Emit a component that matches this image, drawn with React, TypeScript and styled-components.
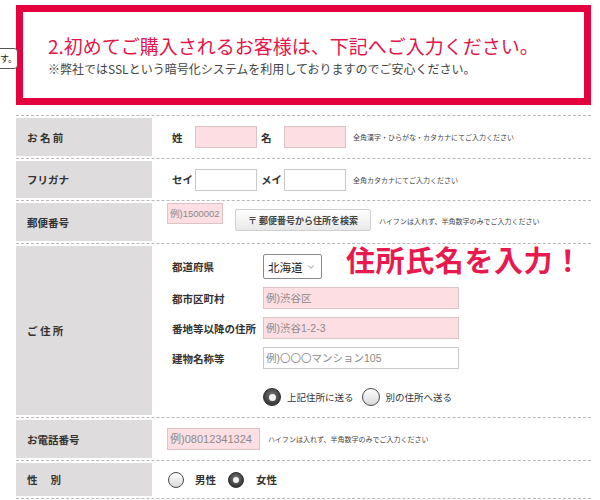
import React from 'react'
import styled, { createGlobalStyle } from 'styled-components'
import { ChevronDown } from 'lucide-react'

const GlobalStyle = createGlobalStyle`
    html, body {
        margin: 0;
        padding: 0;
        background: #ffffff;
        font-family: "Noto Sans CJK JP", "Noto Sans", sans-serif;
        color: #333;
    }
`

const Page = styled.div`
    position: relative;
    width: 600px;
    height: 500px;
    overflow: hidden;
    padding: 5px 9px 0 16px;
    box-sizing: border-box;
`

const Bubble = styled.div`
    position: absolute;
    left: -1px;
    top: 48px;
    width: 19px;
    height: 21px;
    box-sizing: border-box;
    border: 1px solid #555;
    border-radius: 0 4px 4px 0;
    background: #fff;
    font-size: 9px;
    line-height: 19px;
    color: #222;
    z-index: 2;
    white-space: nowrap;
`

const Banner = styled.div`
    height: 100px;
    box-sizing: border-box;
    border: 7px solid #e5003e;
    padding: 22px 0 0 25px;
`

const BannerTitle = styled.div`
    font-size: 19px;
    line-height: 24px;
    color: #e3154b;
`

const BannerNote = styled.div`
    margin-top: 3px;
    font-size: 12px;
    line-height: 15px;
    color: #444;
`

const Table = styled.div`
    margin-top: 10px;
    border-top: 1px dashed #b8b8b8;
`

const Row = styled.div<{ $h: number }>`
    position: relative;
    display: flex;
    padding: 2px 0;
    border-bottom: 1px dashed #b8b8b8;
    height: ${(p) => p.$h}px;
`

const HeadCell = styled.div`
    width: 136px;
    flex-shrink: 0;
    background: #dedcdc;
    display: flex;
    align-items: center;
    padding-left: 11px;
    box-sizing: border-box;
    font-size: 10.5px;
    font-weight: bold;
    color: #333;
    white-space: pre;
`

const BodyCell = styled.div<{ $pl?: number; $top?: boolean }>`
    flex: 1;
    display: flex;
    align-items: ${(p) => (p.$top ? 'flex-start' : 'center')};
    padding-left: ${(p) => p.$pl ?? 15}px;
`

const FieldLabel = styled.span<{ $ml?: number }>`
    width: 23px;
    margin-left: ${(p) => p.$ml ?? 0}px;
    font-size: 10.5px;
    font-weight: bold;
    color: #333;
`

const Input = styled.input<{ $w: number; $h?: number; $pink?: boolean; $fs?: number }>`
    width: ${(p) => p.$w}px;
    height: ${(p) => p.$h ?? 22}px;
    box-sizing: border-box;
    border: 1px solid ${(p) => (p.$pink ? '#dcc3c6' : '#c9c9c9')};
    background: ${(p) => (p.$pink ? '#fddee2' : '#ffffff')};
    padding: 0 2px;
    margin: 0;
    font-family: "Liberation Sans", "Noto Sans CJK JP", sans-serif;
    font-size: ${(p) => p.$fs ?? 11}px;
    outline: none;

    &::placeholder {
        color: #8a8a8a;
    }
`

const Hint = styled.span<{ $ml: number; $mt?: number }>`
    margin-left: ${(p) => p.$ml}px;
    margin-top: ${(p) => p.$mt ?? 0}px;
    font-size: 7px;
    color: #444;
    white-space: nowrap;
`

const SearchButton = styled.button`
    margin: 6px 0 0 12px;
    width: 136px;
    height: 22px;
    border: 1px solid #cfcfcf;
    border-radius: 2px;
    background: linear-gradient(#ffffff, #e8e8e8);
    font-family: "Noto Sans CJK JP", sans-serif;
    font-size: 9px;
    font-weight: bold;
    color: #444;
    padding: 0;
`

const AddressBody = styled.div`
    flex: 1;
    display: flex;
    flex-direction: column;
    gap: 8px;
    padding: 8px 0 0 20px;
`

const SubRow = styled.div<{ $mt?: number }>`
    display: flex;
    align-items: center;
    margin-top: ${(p) => p.$mt ?? 0}px;
`

const SubLabel = styled.span`
    width: 91px;
    font-size: 10.5px;
    font-weight: bold;
    color: #333;
    white-space: nowrap;
`

const SelectBox = styled.div`
    width: 59px;
    height: 25px;
    box-sizing: border-box;
    border: 1px solid #8a8a8a;
    border-radius: 2px;
    display: flex;
    align-items: center;
    justify-content: space-between;
    padding: 0 5px 0 4px;
    font-size: 11.5px;
    color: #222;
    background: #fff;
`

const Callout = styled.div`
    position: absolute;
    left: 330px;
    top: -6px;
    font-size: 29px;
    font-weight: bold;
    color: #e8194f;
    letter-spacing: 0.6px;
    white-space: nowrap;
`

const RadioGroup = styled.div<{ $ml?: number }>`
    display: flex;
    align-items: center;
    margin-left: ${(p) => p.$ml ?? 0}px;
`

const Radio = styled.span<{ $on?: boolean; $size: number }>`
    width: ${(p) => p.$size}px;
    height: ${(p) => p.$size}px;
    box-sizing: border-box;
    border-radius: 50%;
    display: flex;
    align-items: center;
    justify-content: center;
    border: 1px solid ${(p) => (p.$on ? '#2a2a2a' : '#4a4a4a')};
    background: ${(p) =>
        p.$on
            ? 'radial-gradient(circle at 50% 40%, #7a7a7a, #3a3a3a 70%)'
            : 'linear-gradient(#ffffff, #d9d9d9)'};

    &::after {
        content: '';
        display: ${(p) => (p.$on ? 'block' : 'none')};
        width: ${(p) => Math.round(p.$size * 0.38)}px;
        height: ${(p) => Math.round(p.$size * 0.38)}px;
        border-radius: 50%;
        background: #f4f4f4;
    }
`

const RadioText = styled.span<{ $ml: number; $bold?: boolean; $fs: number }>`
    margin-left: ${(p) => p.$ml}px;
    font-size: ${(p) => p.$fs}px;
    font-weight: ${(p) => (p.$bold ? 'bold' : 'normal')};
    color: #333;
`

const App: React.FC = () => {
    return (
        <Page>
            <GlobalStyle />
            <Bubble>す。</Bubble>
            <Banner>
                <BannerTitle>
                    2.初めてご購入されるお客様は、下記へご入力ください。
                </BannerTitle>
                <BannerNote>
                    ※弊社ではSSLという暗号化システムを利用しておりますのでご安心ください。
                </BannerNote>
            </Banner>

            <Table>
                <Row $h={38}>
                    <HeadCell>お 名 前</HeadCell>
                    <BodyCell $pl={20}>
                        <FieldLabel>姓</FieldLabel>
                        <Input $w={62} $pink />
                        <FieldLabel $ml={4}>名</FieldLabel>
                        <Input $w={62} $pink />
                        <Hint $ml={7}>全角漢字・ひらがな・カタカナにてご入力ください</Hint>
                    </BodyCell>
                </Row>

                <Row $h={37}>
                    <HeadCell>フリガナ</HeadCell>
                    <BodyCell $pl={20}>
                        <FieldLabel>セイ</FieldLabel>
                        <Input $w={62} />
                        <FieldLabel $ml={4}>メイ</FieldLabel>
                        <Input $w={62} />
                        <Hint $ml={7}>全角カタカナにてご入力ください</Hint>
                    </BodyCell>
                </Row>

                <Row $h={38}>
                    <HeadCell>郵便番号</HeadCell>
                    <BodyCell $top>
                        <Input $w={56} $h={21} $pink $fs={9.5} placeholder="例)1500002" />
                        <SearchButton>〒 郵便番号から住所を検索</SearchButton>
                        <Hint $ml={8} $mt={13}>
                            ハイフンは入れず、半角数字のみでご入力ください
                        </Hint>
                    </BodyCell>
                </Row>

                <Row $h={169}>
                    <HeadCell>ご 住 所</HeadCell>
                    <AddressBody>
                        <SubRow>
                            <SubLabel>都道府県</SubLabel>
                            <SelectBox>
                                <span>北海道</span>
                                <ChevronDown size={10} strokeWidth={1.5} color="#555" />
                            </SelectBox>
                        </SubRow>
                        <SubRow>
                            <SubLabel>都市区町村</SubLabel>
                            <Input $w={196} $pink $fs={10.5} placeholder="例)渋谷区" />
                        </SubRow>
                        <SubRow>
                            <SubLabel>番地等以降の住所</SubLabel>
                            <Input $w={196} $pink $fs={10.5} placeholder="例)渋谷1-2-3" />
                        </SubRow>
                        <SubRow>
                            <SubLabel>建物名称等</SubLabel>
                            <Input $w={196} $fs={10.5} placeholder="例)〇〇〇マンション105" />
                        </SubRow>
                        <SubRow $mt={11}>
                            <SubLabel />
                            <RadioGroup>
                                <Radio $on $size={18} />
                                <RadioText $ml={6} $fs={9.5}>上記住所に送る</RadioText>
                            </RadioGroup>
                            <RadioGroup $ml={8}>
                                <Radio $size={18} />
                                <RadioText $ml={6} $fs={9.5}>別の住所へ送る</RadioText>
                            </RadioGroup>
                        </SubRow>
                    </AddressBody>
                    <Callout>住所氏名を入力！</Callout>
                </Row>

                <Row $h={38}>
                    <HeadCell>お電話番号</HeadCell>
                    <BodyCell>
                        <Input $w={93} $pink placeholder="例)08012341324" />
                        <Hint $ml={8}>ハイフンは入れず、半角数字のみでご入力ください</Hint>
                    </BodyCell>
                </Row>

                <Row $h={33}>
                    <HeadCell>{'性　 別'}</HeadCell>
                    <BodyCell $pl={16}>
                        <RadioGroup>
                            <Radio $size={16} />
                            <RadioText $ml={11} $fs={10.5} $bold>男性</RadioText>
                        </RadioGroup>
                        <RadioGroup $ml={12}>
                            <Radio $on $size={16} />
                            <RadioText $ml={12} $fs={10.5} $bold>女性</RadioText>
                        </RadioGroup>
                    </BodyCell>
                </Row>
            </Table>
        </Page>
    )
}

export default App
